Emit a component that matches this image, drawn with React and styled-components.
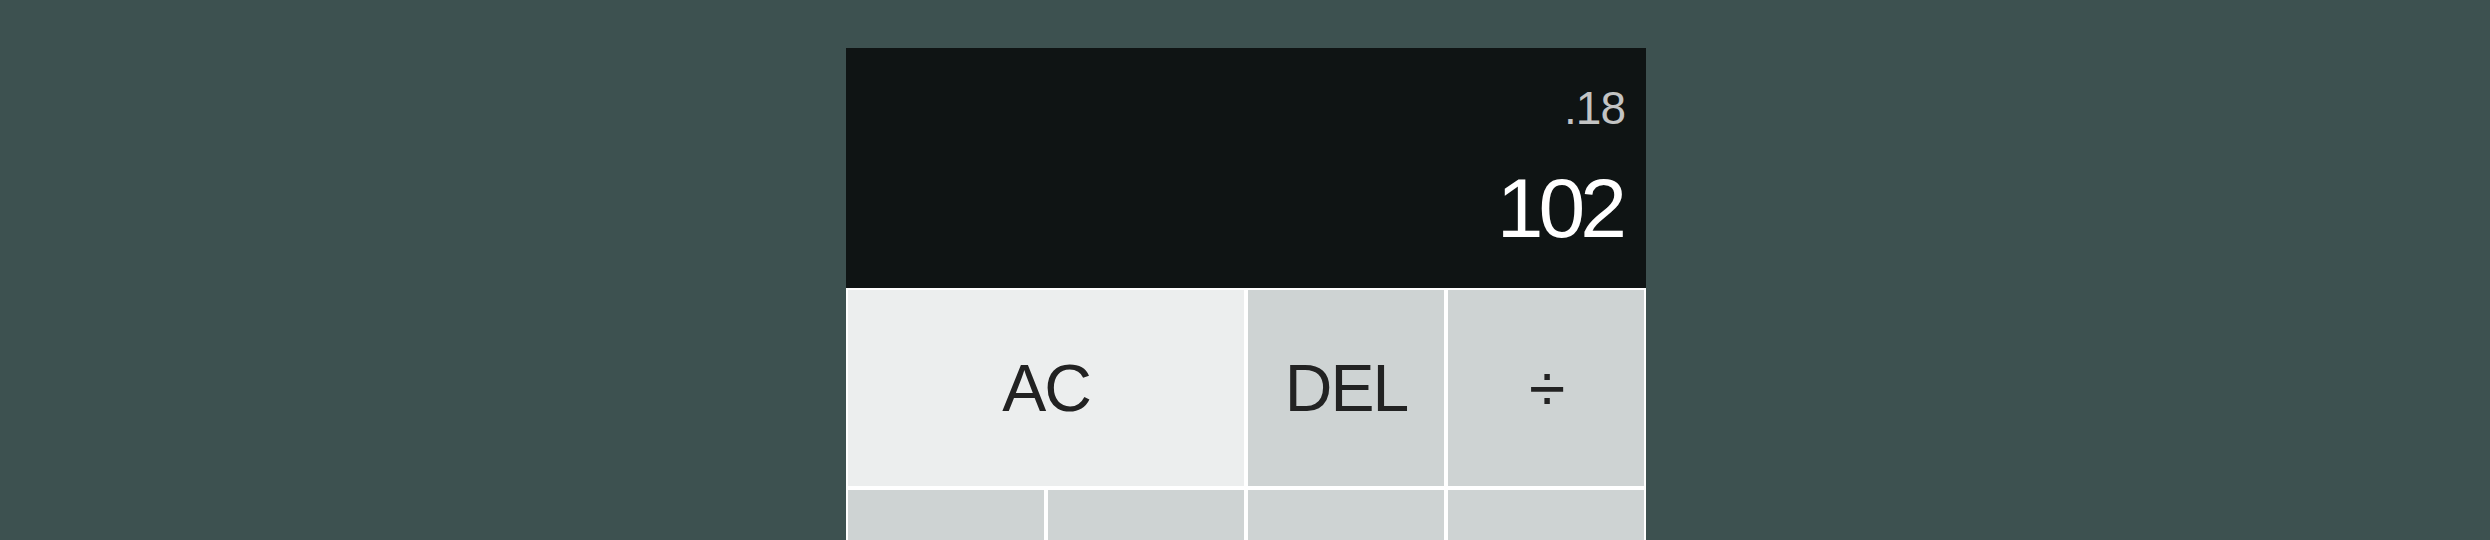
import React from "react";
import styled, { createGlobalStyle } from "styled-components";

const GlobalStyle = createGlobalStyle`
  *, *::before, *::after {
    box-sizing: border-box;
  }

  body {
    margin: 0;
    padding: 0;
    background: #3d5150;
    font-family: "Liberation Sans", Arial, sans-serif;
  }
`;

const CalculatorGrid = styled.div`
  display: grid;
  justify-content: center;
  grid-template-columns: repeat(4, 200px);
  grid-template-rows: minmax(240px, auto) repeat(5, 200px);
  padding-top: 48px;
  padding-left: 2px;
`;

const Output = styled.div`
  grid-column: 1 / -1;
  background-color: rgba(0, 0, 0, 0.75);
  display: flex;
  flex-direction: column;
  align-items: flex-end;
  justify-content: flex-start;
  padding: 37px 24px 24px;
  word-wrap: break-word;
  word-break: break-all;
`;

const PreviousOperand = styled.div`
  color: rgba(255, 255, 255, 0.75);
  font-size: 46px;
  line-height: 46px;
  letter-spacing: -1px;
  margin-right: -3px;
`;

const CurrentOperand = styled.div`
  color: white;
  font-size: 84px;
  line-height: 84px;
  letter-spacing: -5px;
  margin-top: 35px;
`;

const Key = styled.button`
  cursor: pointer;
  font-family: inherit;
  font-size: 66px;
  letter-spacing: -2px;
  color: #222;
  border: 2px solid white;
  outline: none;
  padding: 0;
  background-color: ${({ $light }) =>
    $light ? "rgba(255, 255, 255, 0.9)" : "rgba(255, 255, 255, 0.75)"};
  grid-column: ${({ $wide }) => ($wide ? "span 2" : "auto")};

  &:hover {
    background-color: rgba(255, 255, 255, 0.9);
  }
`;

const keys = [
  { label: "AC", wide: true, light: true },
  { label: "DEL" },
  { label: "÷" },
  { label: "1" },
  { label: "2" },
  { label: "3" },
  { label: "*" },
  { label: "4" },
  { label: "5" },
  { label: "6" },
  { label: "+" },
  { label: "7" },
  { label: "8" },
  { label: "9" },
  { label: "-" },
  { label: "." },
  { label: "0" },
  { label: "=", wide: true, light: true },
];

function App() {
  return (
    <>
      <GlobalStyle />
      <CalculatorGrid>
        <Output>
          <PreviousOperand>.18</PreviousOperand>
          <CurrentOperand>102</CurrentOperand>
        </Output>
        {keys.map((k) => (
          <Key key={k.label} $wide={k.wide} $light={k.light}>
            {k.label}
          </Key>
        ))}
      </CalculatorGrid>
    </>
  );
}

export default App;
